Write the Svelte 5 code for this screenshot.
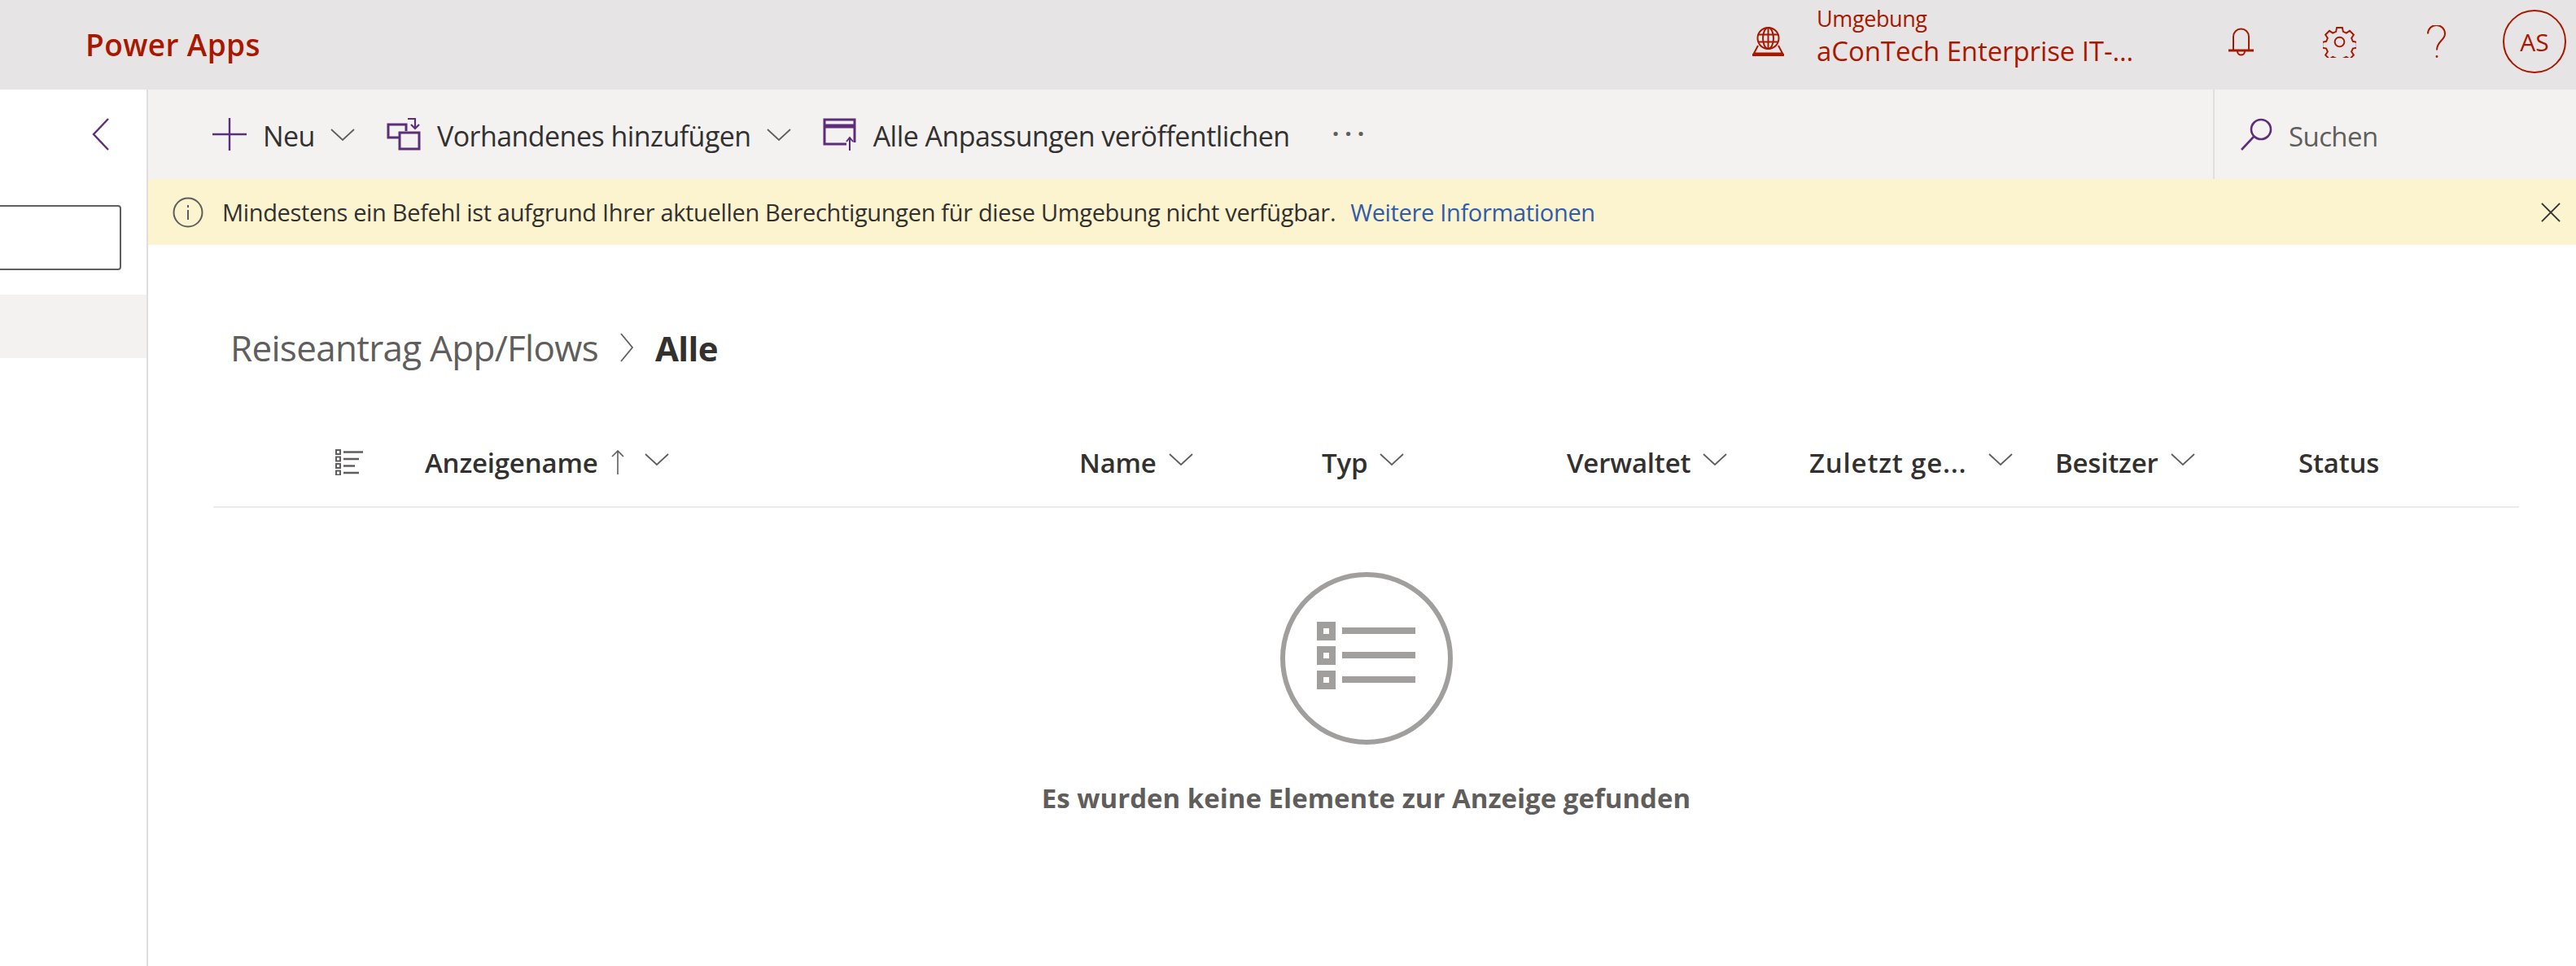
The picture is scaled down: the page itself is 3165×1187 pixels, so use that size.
<script>
	const columns = [
		{ label: 'Anzeigename', sort: true, chevron: true },
		{ label: 'Name', chevron: true },
		{ label: 'Typ', chevron: true },
		{ label: 'Verwaltet', chevron: true },
		{ label: 'Zuletzt ge...', chevron: true, wide: true },
		{ label: 'Besitzer', chevron: true },
		{ label: 'Status' }
	];
</script>

{#snippet chevron()}
	<svg class="chev" viewBox="0 0 30 15" fill="none" stroke="currentColor" stroke-width="1.800"><path d="M1 1 15 14 29 1" /></svg>
{/snippet}

<div class="page">
	<header class="top">
		<div class="brand">Power Apps</div>
		<div class="env">
			<svg class="globe" viewBox="0 0 39 36" fill="none" stroke="currentColor" stroke-width="2">
				<circle cx="19.500" cy="14" r="13" />
				<ellipse cx="19.500" cy="14" rx="6.500" ry="13" />
				<path d="M19.500 1v26M7 9.500h25M7 18.500h25" />
				<path d="M7 23 2 32.500h35L32 23" />
				<path d="M0 34.500h39" stroke-width="3" />
			</svg>
			<div class="env-text">
				<div class="env-label">Umgebung</div>
				<div class="env-name">aConTech Enterprise IT-...</div>
			</div>
		</div>
		<div class="top-icons">
			<svg class="ico bell" viewBox="0 0 31 35" fill="none" stroke="currentColor" stroke-width="2">
				<path d="M6 27V11a9.500 9.500 0 0 1 19 0v16" />
				<path d="M0 28h31" stroke-width="3" />
				<path d="M11 29a4.500 4.500 0 0 0 9 0" />
			</svg>
			<svg class="ico gear" viewBox="0 0 40 40" fill="none" stroke="currentColor" stroke-width="2">
				<path d="M16.500 2h7l1 5 4 1.800 4.300-2.800 5 5-2.800 4.300 1.800 4 5 1v7l-5 1-1.800 4 2.800 4.300-5 5-4.300-2.800-4 1.800-1 5h-7l-1-5-4-1.800-4.300 2.800-5-5 2.800-4.300-1.800-4-5-1v-7l5-1 1.800-4-2.800-4.300 5-5 4.300 2.800 4-1.800z" />
				<circle cx="20" cy="20" r="6" />
			</svg>
			<svg class="ico help" viewBox="0 0 23 41" fill="none" stroke="currentColor" stroke-width="2">
				<path d="M1 10.500a10.500 10.500 0 0 1 21 0c0 8-10 9-10 20" />
				<circle cx="12" cy="38.500" r="1.400" fill="currentColor" stroke="none" />
			</svg>
			<div class="avatar">AS</div>
		</div>
	</header>

	<div class="body">
		<aside class="side">
			<div class="side-top">
				<svg class="back" viewBox="0 0 22 40" fill="none" stroke="currentColor" stroke-width="2.400"><path d="M20 1 2 20l18 19" /></svg>
			</div>
			<div class="side-input"></div>
			<div class="side-item"></div>
		</aside>

		<main class="main">
			<div class="cmd">
				<div class="cmd-items">
					<div class="cmd-btn">
						<svg class="cmd-ico" viewBox="0 0 42 40" fill="none" stroke="currentColor" stroke-width="2.400"><path d="M21 0v40M0 20h42" /></svg>
						<span>Neu</span>
						{@render chevron()}
					</div>
					<div class="cmd-btn">
						<svg class="cmd-ico" viewBox="0 0 42 40" fill="none" stroke="currentColor" stroke-width="3">
							<path d="M16 24H2V8h22v8" />
							<rect x="16" y="18" width="24" height="20" />
							<path d="M26 1h9v11M30 8l5 5 5-5" stroke-width="2.200" />
						</svg>
						<span>Vorhandenes hinzufügen</span>
						{@render chevron()}
					</div>
					<div class="cmd-btn">
						<svg class="cmd-ico" viewBox="0 0 42 40" fill="none" stroke="currentColor" stroke-width="3">
							<path d="M29 32H2V2h37v28" />
							<path d="M2 10h37" stroke-width="5" />
							<path d="M33 40V24M29 29l4-5 4 5" stroke-width="2" />
						</svg>
						<span>Alle Anpassungen veröffentlichen</span>
					</div>
					<div class="more">···</div>
				</div>
				<div class="search">
					<svg class="search-ico" viewBox="0 0 40 40" fill="none" stroke="currentColor" stroke-width="2.600">
						<circle cx="26" cy="14" r="12" />
						<path d="M17 23 2 39" />
					</svg>
					<span>Suchen</span>
				</div>
			</div>

			<div class="notice">
				<svg class="info" viewBox="0 0 38 38" fill="none" stroke="currentColor" stroke-width="2"><circle cx="19" cy="19" r="17.500" /><path d="M19 16v12M19 10v3" /></svg>
				<span>Mindestens ein Befehl ist aufgrund Ihrer aktuellen Berechtigungen für diese Umgebung nicht verfügbar.</span>
				<a href="#top">Weitere Informationen</a>
				<svg class="close" viewBox="0 0 26 26" fill="none" stroke="currentColor" stroke-width="2"><path d="m1 1 24 24M25 1 1 25" /></svg>
			</div>

			<div class="content">
				<div class="crumbs">
					<span class="crumb">Reiseantrag App/Flows</span>
					<svg class="crumb-sep" viewBox="0 0 18 36" fill="none" stroke="currentColor" stroke-width="1.800"><path d="m2 1 14 17L2 35" /></svg>
					<span class="crumb-now">Alle</span>
				</div>

				<div class="thead">
					<div class="th-icon">
						<svg viewBox="0 0 34 32" fill="none" stroke="currentColor">
							<g stroke-width="2"><rect x="1" y="1" width="5" height="5" /><rect x="1" y="9.500" width="5" height="5" /><rect x="1" y="18" width="5" height="5" /><rect x="1" y="26.500" width="5" height="5" /></g>
							<g stroke-width="2.400"><path d="M10 3.500h24M10 12h19M10 20.500h14M10 29h19" /></g>
						</svg>
					</div>
					{#each columns as col}
						<div class="th" class:wide={col.wide}>
							<span>{col.label}</span>
							{#if col.sort}
								<svg class="sort" viewBox="0 0 16 30" fill="none" stroke="currentColor" stroke-width="1.600"><path d="M8 30V1M1 8l7-7 7 7" /></svg>
							{/if}
							{#if col.chevron}
								{@render chevron()}
							{/if}
						</div>
					{/each}
				</div>

				<div class="empty">
					<svg class="empty-ico" viewBox="0 0 212 212" fill="none" stroke="#a19f9d">
						<circle cx="106" cy="106" r="103" stroke-width="6" />
						<g stroke-width="8">
							<rect x="49" y="65" width="15" height="15" />
							<rect x="49" y="95" width="15" height="15" />
							<rect x="49" y="125" width="15" height="15" />
						</g>
						<g stroke-width="8">
							<path d="M76 72h90M76 102h90M76 132h90" />
						</g>
					</svg>
					<div class="empty-text">Es wurden keine Elemente zur Anzeige gefunden</div>
				</div>
			</div>
		</main>
	</div>
</div>

<style>
	:global(body) {
		margin: 0;
		background: #fff;
	}

	.page {
		width: 3165px;
		height: 1187px;
		overflow: hidden;
		display: flex;
		flex-direction: column;
		font-family: 'Open Sans', 'Noto Sans', sans-serif;
		color: #323130;
	}

	.top {
		height: 110px;
		flex: none;
		background: #e6e4e5;
		color: #a81800;
		display: flex;
		align-items: center;
		padding-left: 105px;
	}

	.brand {
		font-size: 37px;
		font-weight: 600;
		letter-spacing: 0.4px;
		margin-bottom: 2px;
	}

	.env {
		margin-left: auto;
		margin-bottom: 8px;
		display: flex;
		align-items: center;
	}

	.globe {
		width: 39px;
		height: 36px;
		margin-right: 40px;
	}

	.env-text {
		margin-top: -10px;
	}

	.env-label {
		font-size: 27px;
		line-height: 34px;
		letter-spacing: -0.4px;
	}

	.env-name {
		font-size: 33px;
		line-height: 46px;
		letter-spacing: -0.1px;
		width: 430px;
	}

	.top-icons {
		display: flex;
		align-items: center;
		margin-left: 76px;
		margin-bottom: 8px;
		padding-right: 12px;
	}

	.ico {
		display: block;
		flex: none;
	}

	.bell {
		width: 31px;
		height: 35px;
		margin-right: 85px;
	}

	.gear {
		width: 41px;
		height: 39px;
		margin-right: 87px;
	}

	.help {
		width: 23px;
		height: 41px;
		margin-right: 70px;
	}

	.avatar {
		width: 78px;
		height: 78px;
		box-sizing: border-box;
		border: 2px solid #a81800;
		border-radius: 50%;
		display: flex;
		align-items: center;
		justify-content: center;
		font-size: 30px;
	}

	.body {
		flex: 1;
		display: flex;
		min-height: 0;
	}

	.side {
		width: 182px;
		flex: none;
		box-sizing: border-box;
		border-right: 2px solid #e1dfdd;
		background: #fff;
	}

	.side-top {
		height: 110px;
		display: flex;
		align-items: center;
		padding-left: 113px;
	}

	.back {
		width: 22px;
		height: 40px;
		color: #5c2d79;
	}

	.side-input {
		width: 151px;
		height: 80px;
		margin-top: 32px;
		margin-left: -2px;
		box-sizing: border-box;
		border: 2px solid #605e5c;
		border-radius: 0 4px 4px 0;
	}

	.side-item {
		height: 78px;
		margin-top: 30px;
		background: #f3f2f1;
	}

	.main {
		flex: 1;
		min-width: 0;
		display: flex;
		flex-direction: column;
	}

	.cmd {
		height: 110px;
		flex: none;
		background: #f3f2f1;
		display: flex;
		align-items: stretch;
		justify-content: space-between;
	}

	.cmd-items {
		display: flex;
		align-items: center;
		padding-left: 79px;
		font-size: 34px;
		letter-spacing: -0.55px;
	}

	.cmd-btn {
		display: flex;
		align-items: center;
	}

	.cmd-btn span,
	.search span {
		padding-top: 4px;
	}

	.cmd-ico {
		width: 42px;
		height: 40px;
		margin-right: 20px;
		color: #5c2d79;
		flex: none;
	}

	.chev {
		width: 30px;
		height: 15px;
		margin: 0 39px 0 19px;
		color: #605e5c;
		flex: none;
	}

	.more {
		margin-left: 52px;
		font-size: 30px;
		font-weight: 700;
		letter-spacing: 7px;
		color: #605e5c;
		transform: translateY(-2px);
	}

	.search {
		width: 446px;
		box-sizing: border-box;
		border-left: 2px solid #e1dfdd;
		display: flex;
		align-items: center;
		padding-left: 31px;
		color: #605e5c;
		font-size: 33px;
		letter-spacing: -0.6px;
	}

	.search-ico {
		width: 40px;
		height: 40px;
		margin-right: 20px;
		color: #5c2d79;
	}

	.notice {
		height: 81px;
		flex: none;
		background: #fcf3cf;
		display: flex;
		align-items: center;
		font-size: 29px;
		letter-spacing: -0.33px;
		padding-left: 30px;
	}

	.notice a {
		color: #2f5ba8;
		text-decoration: none;
		margin-left: 18px;
	}

	.info {
		width: 38px;
		height: 38px;
		margin-right: 23px;
		color: #605e5c;
	}

	.close {
		width: 24px;
		height: 24px;
		color: #323130;
		margin-left: auto;
		margin-right: 19px;
	}

	.content {
		flex: 1;
		display: flex;
		flex-direction: column;
		padding: 0 70px 0 80px;
	}

	.crumbs {
		display: flex;
		align-items: center;
		margin-top: 96px;
		height: 60px;
		padding-left: 21px;
		font-size: 44px;
		letter-spacing: -0.7px;
	}

	.crumb {
		color: #605e5c;
	}

	.crumb-sep {
		width: 18px;
		height: 36px;
		margin: 0 26px;
		color: #605e5c;
	}

	.crumb-now {
		font-weight: 700;
		font-size: 42px;
		letter-spacing: -0.6px;
	}

	.thead {
		display: grid;
		grid-template-columns: 260px 804px 298px 301px 298px 302px 299px 1fr;
		align-items: center;
		margin-top: 57px;
		height: 108px;
		border-bottom: 2px solid #edebe9;
		font-size: 33px;
		font-weight: 600;
		letter-spacing: -0.2px;
	}

	.th-icon {
		padding-left: 150px;
		height: 32px;
	}

	.th-icon svg {
		width: 34px;
		height: 32px;
		color: #605e5c;
		display: block;
	}

	.th {
		display: flex;
		align-items: center;
	}

	.th .chev {
		margin-left: 15px;
		margin-right: 0;
		transform: translateY(-4px);
	}

	.th.wide span {
		letter-spacing: 0.8px;
	}

	.th.wide .chev {
		margin-left: 27px;
	}

	.sort {
		width: 16px;
		height: 30px;
		margin-left: 16px;
		margin-right: 10px;
		color: #605e5c;
		flex: none;
	}

	.empty {
		display: flex;
		flex-direction: column;
		align-items: center;
		margin-top: 79px;
	}

	.empty-ico {
		width: 212px;
		height: 212px;
	}

	.empty-text {
		margin-top: 43px;
		font-size: 33px;
		font-weight: 700;
		color: #605e5c;
	}
</style>
